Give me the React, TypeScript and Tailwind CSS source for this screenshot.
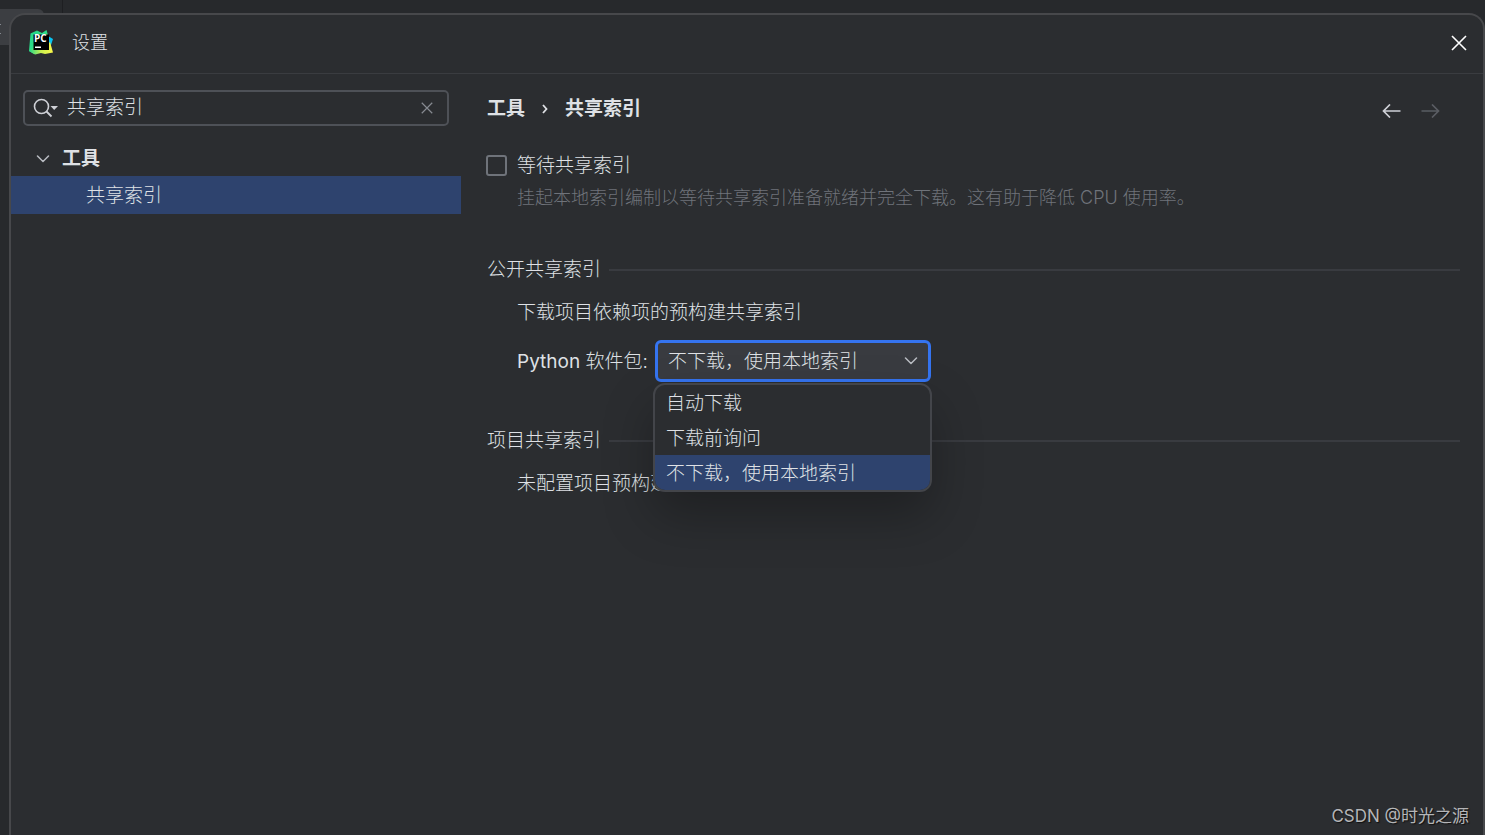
import { useState } from "react";

const LOCAL = "不下载，使用本地索引";
const OPTIONS = ["自动下载", "下载前询问", LOCAL];

function ProductLogo() {
  return (
    <svg width="26" height="26" viewBox="0 0 26 26" aria-hidden="true">
      <defs>
        <linearGradient id="pcGreen" x1="0" y1="0" x2="1" y2="1">
          <stop offset="0" stopColor="#21d789" />
          <stop offset="0.55" stopColor="#2fdc86" />
          <stop offset="1" stopColor="#8aee5c" />
        </linearGradient>
        <linearGradient id="pcYellow" x1="0" y1="0.5" x2="1" y2="0.5">
          <stop offset="0" stopColor="#21d789" />
          <stop offset="0.5" stopColor="#c9f04f" />
          <stop offset="1" stopColor="#fcf84a" />
        </linearGradient>
      </defs>
      <path d="M20 6 L25 9 L23 15 L15 14Z" fill="#07c3f2" />
      <path d="M2.5 3.5 L9 0.5 L14 3 L18.5 0 L20.5 7 L8 21 L6 24 L1 21Z" fill="url(#pcGreen)" />
      <path d="M1 21 L7 17 L19 15 L22 12 L25 22.5 L17 24 L13 23 L7 24.5Z" fill="url(#pcYellow)" />
      <rect x="5.5" y="4.5" width="15.5" height="15.5" fill="#000" />
      <text x="6" y="12" fill="#fff" fontSize="10" fontWeight="700" fontFamily="'Open Sans', sans-serif">
        PC
      </text>
      <rect x="7" y="16.5" width="6" height="1.5" fill="#fff" />
    </svg>
  );
}

function Chevron() {
  return (
    <svg width="14" height="8" viewBox="0 0 14 8" fill="none" stroke="#b9bcc2" strokeWidth="1.5" strokeLinecap="round" strokeLinejoin="round" aria-hidden="true">
      <path d="M1.5 1 L7 6.5 L12.5 1" />
    </svg>
  );
}

function Cross({ className }: { className: string }) {
  return (
    <svg className={className} viewBox="0 0 16 16" fill="none" stroke="currentColor" strokeWidth="1.6" aria-hidden="true">
      <path d="M1 1 L15 15 M15 1 L1 15" />
    </svg>
  );
}

function SectionTitle({ children }: { children: string }) {
  return (
    <h2 className="flex items-center gap-2 leading-7">
      {children}
      <span className="h-0.5 flex-1 bg-[#393b40]" />
    </h2>
  );
}

function Sidebar() {
  const [query, setQuery] = useState("共享索引");
  return (
    <aside className="w-[450px] shrink-0 pt-4">
      <div className="mr-3 ml-3 flex h-9 items-center rounded-[5px] border-2 border-[#4e5157] pr-3.5 pl-2">
        <svg width="26" height="20" viewBox="0 0 26 20" fill="none" aria-hidden="true">
          <circle cx="8.5" cy="8.5" r="7" stroke="#ced0d6" strokeWidth="1.6" />
          <path d="M13.5 13.5 L18.5 18.5" stroke="#ced0d6" strokeWidth="1.8" />
          <path d="M17.5 8 H25 L21.2 12Z" fill="#ced0d6" />
        </svg>
        <input
          aria-label="搜索设置"
          value={query}
          onChange={(e) => setQuery(e.target.value)}
          className="ml-2 min-w-0 flex-1 bg-transparent outline-none"
        />
        <button type="button" aria-label="清除" onClick={() => setQuery("")} className="text-[#868a91]">
          <Cross className="size-3" />
        </button>
      </div>
      <nav className="mt-3.5">
        <button type="button" className="flex h-9 w-full items-center gap-3 pt-0.5 pl-[25px] font-semibold">
          <Chevron />
          工具
        </button>
        <a href="#shared" className="flex h-[38px] items-center bg-[#2e436e] pt-0.5 pl-[75px]">
          共享索引
        </a>
      </nav>
    </aside>
  );
}

function PackageSelect() {
  const [value, setValue] = useState(LOCAL);
  return (
    <div className="relative">
      <div className="flex h-[42px] w-[276px] items-center rounded-md border-3 border-[#3574f0] bg-[#393b40] pr-2.5 pl-2.5">
        <select
          id="packages"
          value={value}
          onChange={(e) => setValue(e.target.value)}
          className="min-w-0 flex-1 appearance-none bg-transparent pt-0.5 outline-none"
        >
          {OPTIONS.map((o) => (
            <option key={o}>{o}</option>
          ))}
        </select>
        <Chevron />
      </div>
      <ul
        role="listbox"
        aria-label="Python 软件包"
        className="absolute top-[43px] -left-0.5 z-10 w-[279px] overflow-hidden rounded-xl border-2 border-[#43454a] bg-[#2b2d30] shadow-[0_24px_50px_rgba(0,0,0,0.28)]"
      >
        {OPTIONS.map((o) => (
          <li
            key={o}
            role="option"
            aria-selected={o === value}
            onClick={() => setValue(o)}
            className={
              o === value
                ? "h-[35px] bg-[#2e436e] pt-px pl-[11px] leading-[35px]"
                : "h-[35px] pt-px pl-[11px] leading-[35px]"
            }
          >
            {o}
          </li>
        ))}
      </ul>
    </div>
  );
}

export default function App() {
  return (
    <div className="relative flex min-h-screen flex-col overflow-hidden bg-[#27292c] pt-[13px] pl-[9px] font-['Inter','Noto_Sans_CJK_SC',sans-serif] text-[19px] font-light text-[#dfe1e5]">
      <div className="absolute top-[9px] left-0 h-9 w-11 rounded-tr-md bg-[#3c3e42]" />
      <div className="absolute top-6 left-0 flex flex-col gap-2">
        <span className="h-px w-px bg-[#868a91]" />
        <span className="h-px w-px bg-[#868a91]" />
      </div>
      <div className="absolute top-0 left-[62px] h-4 w-px bg-[#1e1f22]" />
      <div className="relative flex flex-1 flex-col rounded-t-2xl border-2 border-b-0 border-[#47484b] bg-[#2b2d30]">
        <header className="flex h-[59px] items-center border-b border-[#3a3c40] pr-4 pb-0.5 pl-[17px]">
          <ProductLogo />
          <h1 className="ml-[18px] flex-1 text-lg">设置</h1>
          <button type="button" aria-label="关闭" className="text-white">
            <Cross className="size-4" />
          </button>
        </header>
        <div className="flex flex-1">
          <Sidebar />
          <main className="min-w-0 flex-1 pt-5 pr-[23px] pl-[26px]">
            <div className="flex h-[30px] items-center">
              <div className="flex flex-1 items-center gap-[17px] font-semibold">
                <span>工具</span>
                <svg width="6" height="10" viewBox="0 0 6 10" fill="none" stroke="#dfe1e5" strokeWidth="1.8" aria-hidden="true">
                  <path d="M1 1 L4.5 5 L1 9" />
                </svg>
                <span>共享索引</span>
              </div>
              <div className="flex gap-5 pt-1 pr-5">
                <button type="button" aria-label="后退" className="text-[#ced0d6]">
                  <svg width="19" height="14" viewBox="0 0 19 14" fill="none" stroke="currentColor" strokeWidth="1.7" aria-hidden="true">
                    <path d="M18.5 7 H1.5 M8 0.5 L1.5 7 L8 13.5" />
                  </svg>
                </button>
                <button type="button" aria-label="前进" className="text-[#5a5d63]">
                  <svg width="19" height="14" viewBox="0 0 19 14" fill="none" stroke="currentColor" strokeWidth="1.7" aria-hidden="true">
                    <path d="M0.5 7 H17.5 M11 0.5 L17.5 7 L11 13.5" />
                  </svg>
                </button>
              </div>
            </div>

            <div className="mt-[26px] flex items-center gap-2.5 leading-7">
              <input
                id="wait"
                type="checkbox"
                className="-ml-px size-[21px] appearance-none rounded-[3px] border-2 border-[#6f737a] checked:bg-[#3574f0]"
              />
              <label htmlFor="wait" className="pt-0.5">等待共享索引</label>
            </div>
            <p className="mt-1 pl-[30px] text-lg leading-7 text-[#6f737a]">
              挂起本地索引编制以等待共享索引准备就绪并完全下载。这有助于降低 CPU 使用率。
            </p>

            <section className="mt-11">
              <SectionTitle>公开共享索引</SectionTitle>
              <div className="pl-[30px]">
                <p className="mt-[15px] leading-7">下载项目依赖项的预构建共享索引</p>
                <div className="mt-[13px] flex items-center gap-[7px]">
                  <label htmlFor="packages" className="pt-0.5">
                    <span className="font-normal">Python</span> 软件包:
                  </label>
                  <PackageSelect />
                </div>
              </div>
            </section>

            <section className="mt-[45px]">
              <SectionTitle>项目共享索引</SectionTitle>
              <p className="mt-[15px] pl-[30px] leading-7">未配置项目预构建共享索引的下载服务器地址</p>
            </section>
          </main>
        </div>
        <div className="absolute right-3.5 bottom-[5px] text-[17px] leading-7 font-normal text-[#b4b5b7] [text-shadow:1px_1px_1px_#111]">
          CSDN @时光之源
        </div>
      </div>
    </div>
  );
}
